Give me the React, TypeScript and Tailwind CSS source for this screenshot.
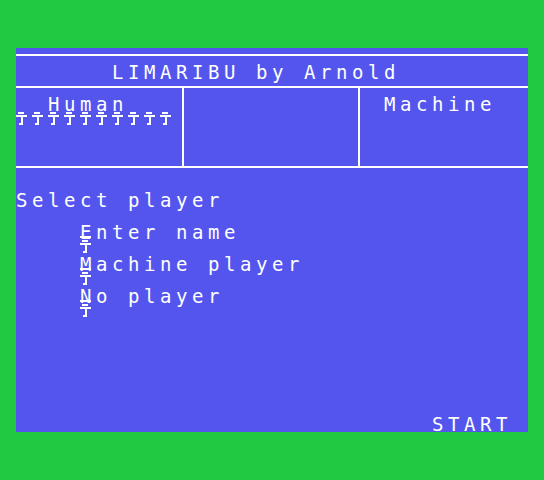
import React from "react";

const txt =
  "font-['DejaVu_Sans_Mono',monospace] text-[19px] leading-4 tracking-[4.56px] text-white whitespace-pre h-4";

const Marker = () => (
  <svg width="16" height="16" viewBox="0 0 16 16" className="block shrink-0">
    <rect x="2" y="0" width="6" height="2" fill="#fff" />
    <rect x="0" y="3" width="11" height="2" fill="#fff" />
    <rect x="5" y="5" width="2" height="8" fill="#fff" />
    <rect x="3" y="11" width="2" height="2" fill="#fff" />
  </svg>
);

const Option = ({ first, rest }: { first: string; rest: string }) => (
  <div>
    <div className={`${txt} pl-16`}>
      <span className="relative">
        {first}
        <span className="absolute left-0 top-[15px] h-[2px] w-[11px] bg-white" />
      </span>
      {rest}
    </div>
    <div className="h-4 pl-16 flex">
      <Marker />
    </div>
  </div>
);

const App = () => {
  const markers = Array.from({ length: 10 }, (_, i) => i);

  return (
    <div className="w-[544px] h-[480px] bg-[#21c842] pt-12 pl-4">
      <div className="w-[512px] h-[384px] bg-[#5455ed] flex flex-col">
        <div className="h-[6px]"></div>
        <div className="h-[2px] bg-white"></div>
        <div className={`${txt} mt-2 pl-24`}>LIMARIBU by Arnold</div>
        <div className="h-[6px]"></div>
        <div className="h-[2px] bg-white"></div>

        {/* Player panels */}
        <div className="h-[78px] flex">
          <div className="w-[166px] pt-2">
            <div className={`${txt} pl-8`}>Human</div>
            <div className="h-4 flex">
              {markers.map((m) => (
                <Marker key={m} />
              ))}
            </div>
          </div>
          <div className="w-[2px] bg-white"></div>
          <div className="w-[174px]"></div>
          <div className="w-[2px] bg-white"></div>
          <div className="flex-1 pt-2">
            <div className={`${txt} pl-6`}>Machine</div>
          </div>
        </div>
        <div className="h-[2px] bg-white"></div>

        <div className={`${txt} mt-6`}>Select player</div>
        <div className="mt-4">
          <Option first="E" rest="nter name" />
          <Option first="M" rest="achine player" />
          <Option first="N" rest="o player" />
        </div>

        <div className={`${txt} mt-auto pl-[416px]`}>START</div>
      </div>
    </div>
  );
};

export default App;
